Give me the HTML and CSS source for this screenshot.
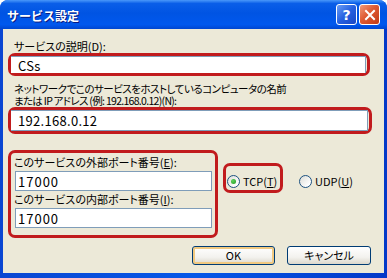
FILE: index.html
```html
<!DOCTYPE html>
<html lang="ja">

<head>
    <meta charset="UTF-8">
    <title>サービス設定</title>
    <link rel="stylesheet" href="styles.css">
</head>

<body>
    <div class="window">
        <div class="titlebar">
            <span class="title">サービス設定</span>
            <div class="caption-buttons">
                <span class="cap-btn help">?</span>
                <span class="cap-btn close">
                    <svg width="12" height="12" viewBox="0 0 12 12">
                        <path d="M2 2 L10 10 M10 2 L2 10" stroke="#fff" stroke-width="2" stroke-linecap="square" />
                    </svg>
                </span>
            </div>
        </div>
        <div class="frame">
            <div class="client">
                <div class="label label-desc">サービスの説明(D):</div>
                <div class="mark mark-desc">
                    <div class="field">CSs</div>
                </div>

                <div class="label label-host">
                    <div class="host-line1">ネットワークでこのサービスをホストしているコンピュータの名前</div>
                    <div class="host-line2">または IP アドレス (例: 192.168.0.12)(N):</div>
                </div>
                <div class="mark mark-host">
                    <div class="field">192.168.0.12</div>
                </div>

                <div class="ports">
                    <div class="mark mark-ports">
                        <div class="label">このサービスの外部ポート番号(<u>E</u>):</div>
                        <div class="field">17000</div>
                        <div class="label">このサービスの内部ポート番号(<u>I</u>):</div>
                        <div class="field">17000</div>
                    </div>
                    <div class="mark mark-tcp">
                        <div class="radio"><span class="dot checked"></span><span>TCP(<u>T</u>)</span></div>
                    </div>
                    <div class="radio udp"><span class="dot"></span><span>UDP(<u>U</u>)</span></div>
                </div>

                <div class="buttons">
                    <button class="btn btn-default">OK</button>
                    <button class="btn">キャンセル</button>
                </div>
            </div>
        </div>
    </div>
</body>

</html>
```

FILE: styles.css
```css
body {
    margin: 0;
    background: #fff;
    font-family: "Noto Sans CJK JP", "Noto Sans", sans-serif;
}

.window {
    width: 387px;
    height: 278px;
    display: flex;
    flex-direction: column;
    border-radius: 8px 8px 0 0;
    overflow: hidden;
    background: #0650dc;
}

.titlebar {
    height: 29px;
    flex: none;
    display: flex;
    align-items: center;
    justify-content: space-between;
    padding: 0 7px 0 7px;
    box-sizing: border-box;
    background: linear-gradient(#4a98fa 0%, #0a5ee8 12%, #0054e3 45%, #0058ee 85%, #0046d0 100%);
}

.title {
    color: #fff;
    font-size: 12px;
    font-weight: bold;
    text-shadow: 1px 1px #0a1a80;
    padding-top: 1px;
}

.caption-buttons {
    display: flex;
    gap: 2px;
}

.cap-btn {
    width: 19px;
    height: 19px;
    border: 1px solid #fff;
    border-radius: 3px;
    display: flex;
    align-items: center;
    justify-content: center;
    color: #fff;
    font-family: "DejaVu Sans", sans-serif;
    font-weight: bold;
    font-size: 14px;
}

.help {
    background: linear-gradient(135deg, #6a9df5, #2560e0 50%, #1a47c4);
}

.close {
    background: linear-gradient(135deg, #f09a7a, #df5a32 45%, #c03a16);
}

.frame {
    flex: 1;
    display: flex;
    padding: 0 5px 5px 3px;
    background: linear-gradient(to right, #0a46d2, #0658e8 50%, #0338c8);
}

.client {
    flex: 1;
    display: flex;
    flex-direction: column;
    align-items: flex-start;
    padding: 12px 12px 0 5px;
    background: #ece9d8;
}

.label {
    font-size: 11px;
    line-height: 11px;
    color: #000;
    white-space: nowrap;
    font-feature-settings: "palt";
}

.label-desc {
    margin-left: 6px;
    margin-bottom: 1px;
}

.label-host {
    margin: 7px 0 0 6px;
    font-size: 10.5px;
    line-height: 12px;
}

.host-line1 {
    letter-spacing: -0.5px;
}

.host-line2 {
    letter-spacing: -0.7px;
}

.mark {
    box-sizing: border-box;
    border: 3px solid #c11b1d;
    border-radius: 7px;
}

.field {
    box-sizing: border-box;
    background: #fff;
    border: 1px solid #7f9db9;
    font-size: 13px;
    padding-left: 5px;
    display: flex;
    align-items: center;
    letter-spacing: 0.3px;
}

.mark-desc {
    width: 362px;
    height: 23px;
    padding: 0 1px 0 0;
}

.mark-desc .field {
    height: 17px;
    border-left: none;
    border-bottom: none;
    padding-left: 7px;
}

.mark-host {
    width: 364px;
    height: 27px;
    padding: 0 1px 0 0;
}

.mark-host .field {
    height: 21px;
    border-left: none;
    padding-left: 7px;
}

.ports {
    display: flex;
    align-items: flex-start;
    margin-top: 16px;
}

.mark-ports {
    width: 210px;
    height: 88px;
    padding: 4px 3px 0 3px;
}

.mark-ports .label {
    margin-bottom: 3px;
}

.mark-ports .field {
    width: 197px;
    height: 20px;
    margin: 0 0 3px 1px;
    padding-left: 2px;
    letter-spacing: 1px;
}

.mark-tcp {
    width: 60px;
    height: 30px;
    margin: 13px 0 0 5px;
    padding: 9px 0 0 1px;
}

.radio {
    display: flex;
    align-items: center;
    gap: 3px;
    font-size: 11px;
    line-height: 13px;
    white-space: nowrap;
    font-feature-settings: "palt";
}

.udp {
    margin: 25px 0 0 16px;
}

.dot {
    width: 11px;
    height: 11px;
    border: 1px solid #1c5180;
    border-radius: 50%;
    background: linear-gradient(135deg, #dcdcd6, #fff 80%);
    display: flex;
    align-items: center;
    justify-content: center;
}

.dot.checked::after {
    content: "";
    width: 5px;
    height: 5px;
    border-radius: 50%;
    background: radial-gradient(circle at 35% 35%, #5ed35e, #1f9a1f);
}

.buttons {
    align-self: stretch;
    display: flex;
    justify-content: flex-end;
    gap: 12px;
    margin: 8px 1px 0 0;
}

.btn {
    box-sizing: border-box;
    width: 84px;
    height: 19px;
    padding: 0;
    border: 1px solid #003c74;
    border-radius: 3px;
    background: linear-gradient(#fff, #f3f2ee 60%, #dcd8cc);
    font-family: "Noto Sans CJK JP", sans-serif;
    font-size: 11px;
    line-height: 15px;
    color: #000;
    font-feature-settings: "palt";
}

.btn-default {
    width: 83px;
    box-shadow: inset 0 0 0 2px #f1c980;
}
```
